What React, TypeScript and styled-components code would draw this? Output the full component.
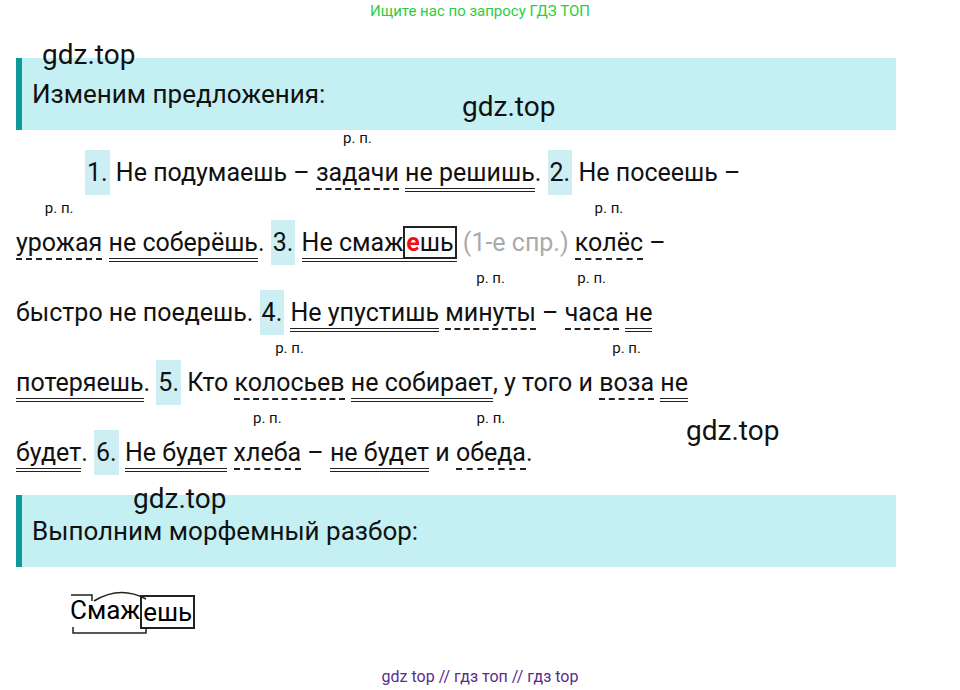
import React from 'react';
import styled, { createGlobalStyle } from 'styled-components';

const Global = createGlobalStyle`
  body { margin: 0; background: #fff; font-family: 'Roboto', 'Noto Sans', sans-serif; }
`;

const Page = styled.div`
  width: 960px;
  height: 690px;
  position: relative;
  overflow: hidden;
`;

const TopNote = styled.div`
  text-align: center;
  color: #2ecc40;
  font-family: 'Roboto', sans-serif;
  font-size: 15px;
  padding-top: 2px;
  height: 56px;
`;

const Bar = styled.div`
  margin: 0 64px 0 16px;
  height: 72px;
  background: #c4f0f3;
  border-left: 6px solid #0e9a9a;
  display: flex;
  align-items: center;
  padding-left: 10px;
  font-size: 26px;
  color: #111;
`;

const Para = styled.div`
  margin: 0 16px;
  font-size: 25px;
  line-height: 70px;
  color: #111;
  text-indent: 69px;
  padding-top: 8px;
  height: 357px;
`;

const Num = styled.span`
  background: #cdeff4;
  padding: 8px 2px;
`;

const Word = styled.span<{ $kind: 'pred' | 'obj' }>`
  position: relative;
  display: inline-block;
  text-indent: 0;
  line-height: 30px;
  ${({ $kind }) =>
    $kind === 'pred'
      ? 'border-bottom: 4px double #222;'
      : 'border-bottom: 2px dashed #222;'}
`;

const Note = styled.span`
  position: absolute;
  left: 50%;
  top: -28px;
  transform: translateX(-50%);
  font-size: 15px;
  line-height: 16px;
  white-space: nowrap;
`;

const Grey = styled.span`
  color: #aaa;
`;

const Box = styled.span`
  border: 2px solid #222;
  padding: 0 1px;
  line-height: 30px;
`;

const Red = styled.span`
  color: #e11;
  font-weight: 700;
`;

const Mark = styled.div<{ $x: number; $y: number }>`
  position: absolute;
  left: ${({ $x }) => $x}px;
  top: ${({ $y }) => $y}px;
  font-family: 'Roboto', sans-serif;
  font-size: 28px;
  color: #111;
`;

const Morph = styled.div`
  margin: 28px 0 0 70px;
  height: 60px;
  position: relative;
  font-size: 26px;
  display: flex;
  align-items: flex-start;
  line-height: 30px;
`;

const Footer = styled.div`
  position: absolute;
  bottom: 4px;
  width: 100%;
  text-align: center;
  font-family: 'Roboto', sans-serif;
  font-size: 16px;
  color: #5a2d8a;
`;

const W: React.FC<{ k: 'pred' | 'obj'; n?: boolean; children: React.ReactNode }> = ({ k, n, children }) => (
  <Word $kind={k}>
    {n && <Note>р. п.</Note>}
    {children}
  </Word>
);

export default function App() {
  return (
    <Page>
      <Global />
      <TopNote>Ищите нас по запросу ГДЗ ТОП</TopNote>
      <Bar>Изменим предложения:</Bar>
      <Para>
        <Num>1.</Num> Не подумаешь – <W k="obj" n>задачи</W> <W k="pred">не решишь</W>. <Num>2.</Num> Не посеешь –
        <br />
        <W k="obj" n>урожая</W> <W k="pred">не соберёшь</W>. <Num>3.</Num>{' '}
        <W k="pred">Не смаж<Box><Red>е</Red>шь</Box></W> <Grey>(1-е спр.)</Grey> <W k="obj" n>колёс</W> –
        <br />
        быстро не поедешь. <Num>4.</Num> <W k="pred">Не упустишь</W> <W k="obj" n>минуты</W> – <W k="obj" n>часа</W> <W k="pred">не</W>
        <br />
        <W k="pred">потеряешь</W>. <Num>5.</Num> Кто <W k="obj" n>колосьев</W> <W k="pred">не собирает</W>, у того и <W k="obj" n>воза</W> <W k="pred">не</W>
        <br />
        <W k="pred">будет</W>. <Num>6.</Num> <W k="pred">Не будет</W> <W k="obj" n>хлеба</W> – <W k="pred">не будет</W> и <W k="obj" n>обеда</W>.
      </Para>
      <Bar>Выполним морфемный разбор:</Bar>
      <Morph>
        <span>Смаж</span>
        <Box>ешь</Box>
        <svg width="150" height="60" style={{ position: 'absolute', left: 0, top: -6 }}>
          <path d="M1 6 H22 V12" fill="none" stroke="#222" strokeWidth="1.5" />
          <path d="M24 12 Q50 -4 76 10" fill="none" stroke="#222" strokeWidth="1.5" />
          <path d="M3 38 V44 H76 V38" fill="none" stroke="#222" strokeWidth="1.5" />
        </svg>
      </Morph>
      <Mark $x={42} $y={38}>gdz.top</Mark>
      <Mark $x={462} $y={90}>gdz.top</Mark>
      <Mark $x={686} $y={414}>gdz.top</Mark>
      <Mark $x={133} $y={482}>gdz.top</Mark>
      <Footer>gdz top // гдз топ // гдз top</Footer>
    </Page>
  );
}
